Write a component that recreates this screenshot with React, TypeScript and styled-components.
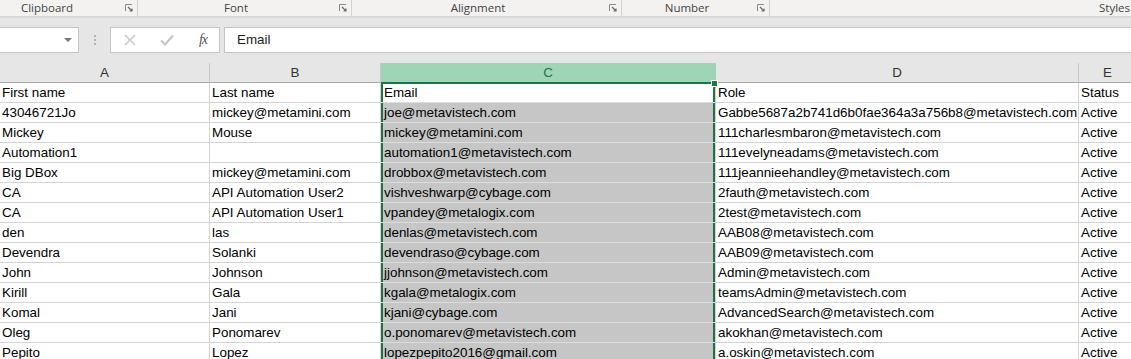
import React from 'react'
import styled, { createGlobalStyle } from 'styled-components'

//-----------------------------------------------------------------------------
// Data
//-----------------------------------------------------------------------------
const columns = ['A', 'B', 'C', 'D', 'E']
const selectedColumn = 2

const rows: string[][] = [
  ['First name', 'Last name', 'Email', 'Role', 'Status'],
  ['43046721Jo', 'mickey@metamini.com', 'joe@metavistech.com', 'Gabbe5687a2b741d6b0fae364a3a756b8@metavistech.com', 'Active'],
  ['Mickey', 'Mouse', 'mickey@metamini.com', '111charlesmbaron@metavistech.com', 'Active'],
  ['Automation1', '', 'automation1@metavistech.com', '111evelyneadams@metavistech.com', 'Active'],
  ['Big DBox', 'mickey@metamini.com', 'drobbox@metavistech.com', '111jeannieehandley@metavistech.com', 'Active'],
  ['CA', 'API Automation User2', 'vishveshwarp@cybage.com', '2fauth@metavistech.com', 'Active'],
  ['CA', 'API Automation User1', 'vpandey@metalogix.com', '2test@metavistech.com', 'Active'],
  ['den', 'las', 'denlas@metavistech.com', 'AAB08@metavistech.com', 'Active'],
  ['Devendra', 'Solanki', 'devendraso@cybage.com', 'AAB09@metavistech.com', 'Active'],
  ['John', 'Johnson', 'jjohnson@metavistech.com', 'Admin@metavistech.com', 'Active'],
  ['Kirill', 'Gala', 'kgala@metalogix.com', 'teamsAdmin@metavistech.com', 'Active'],
  ['Komal', 'Jani', 'kjani@cybage.com', 'AdvancedSearch@metavistech.com', 'Active'],
  ['Oleg', 'Ponomarev', 'o.ponomarev@metavistech.com', 'akokhan@metavistech.com', 'Active'],
  ['Pepito', 'Lopez', 'lopezpepito2016@gmail.com', 'a.oskin@metavistech.com', 'Active']
]

// the clipboard group starts left of the visible area
const groups = [
  { label: 'Clipboard', width: 164, offset: -26 },
  { label: 'Font', width: 214, offset: 0 },
  { label: 'Alignment', width: 270, offset: 0 },
  { label: 'Number', width: 148, offset: 0 }
]

//-----------------------------------------------------------------------------
// Icons
//-----------------------------------------------------------------------------
const Launcher = () => (
  <svg width="8" height="8" viewBox="0 0 8 8">
    <path d="M0.5 7V0.5H7" fill="none" stroke="#8a8a8a" strokeWidth="1" />
    <path d="M3 3L7 7M7 4.5V7H4.5" fill="none" stroke="#6a6a6a" strokeWidth="1.2" />
  </svg>
)

const CancelIcon = () => (
  <svg width="12" height="12" viewBox="0 0 12 12">
    <path d="M1 1L11 11M11 1L1 11" stroke="#c4c4c4" strokeWidth="1.4" />
  </svg>
)

const EnterIcon = () => (
  <svg width="14" height="12" viewBox="0 0 14 12">
    <path d="M1 6.5L5 10.5L13 1.5" fill="none" stroke="#c4c4c4" strokeWidth="2" />
  </svg>
)

//-----------------------------------------------------------------------------
// Component
//-----------------------------------------------------------------------------
export const App = () => {
  return (
    <Page>
      <GlobalStyle />
      <Ribbon>
        {groups.map(g => (
          <Group key={g.label} width={g.width} offset={g.offset}>
            <GroupLabel>{g.label}</GroupLabel>
            <LauncherSlot><Launcher /></LauncherSlot>
          </Group>
        ))}
        <LastGroup>
          <GroupLabel>Styles</GroupLabel>
        </LastGroup>
      </Ribbon>
      <RibbonShadow />
      <FormulaArea>
        <NameBox>
          <DropArrow />
        </NameBox>
        <Grip>
          <Dot /><Dot /><Dot />
        </Grip>
        <FxBox>
          <CancelIcon />
          <EnterIcon />
          <FxLabel>fx</FxLabel>
        </FxBox>
        <FormulaInput>Email</FormulaInput>
      </FormulaArea>
      <Sheet>
        {columns.map((c, i) => (
          <ColumnHeader key={c} selected={i === selectedColumn}>{c}</ColumnHeader>
        ))}
        {rows.map((row, r) =>
          row.map((value, c) => (
            <Cell
              key={`${r}-${c}`}
              selected={c === selectedColumn}
              active={c === selectedColumn && r === 0}>
              {value}
              {c === selectedColumn && r === 0 && <FillHandle />}
            </Cell>
          ))
        )}
      </Sheet>
    </Page>
  )
}

//-----------------------------------------------------------------------------
// Styled Components
//-----------------------------------------------------------------------------
const GlobalStyle = createGlobalStyle`
  body {
    margin: 0;
    background: #ffffff;
    font-family: "Liberation Sans", Arial, sans-serif;
  }
`

const Page = styled.div`
  width: 1131px;
  height: 359px;
  overflow: hidden;
  background: #e6e6e6;
`

const Ribbon = styled.div`
  display: flex;
  height: 16px;
  background: #f3f2f1;
`

const Group = styled.div<{ width: number; offset: number }>`
  position: relative;
  flex: none;
  width: ${p => p.width}px;
  margin-left: ${p => p.offset}px;
  display: flex;
  justify-content: center;
  align-items: center;
  padding-right: 17px;
  border-right: 1px solid #d2d2d2;
  box-sizing: border-box;
  height: 16px;
`

const LastGroup = styled.div`
  flex: 1;
  display: flex;
  justify-content: flex-end;
  align-items: center;
  padding-right: 1px;
`

const GroupLabel = styled.span`
  font-family: "Open Sans", "Noto Sans", sans-serif;
  font-size: 11.5px;
  color: #444444;
  line-height: 16px;
`

const LauncherSlot = styled.span`
  position: absolute;
  right: 4px;
  top: 4px;
  display: flex;
`

const RibbonShadow = styled.div`
  height: 3px;
  background: linear-gradient(#d4d4d4, #e6e6e6);
`

const FormulaArea = styled.div`
  display: flex;
  align-items: center;
  height: 26px;
  margin-top: 8px;
  margin-bottom: 10px;
`

const NameBox = styled.div`
  width: 79px;
  height: 26px;
  box-sizing: border-box;
  background: #ffffff;
  border: 1px solid #c6c6c6;
  border-left: none;
  display: flex;
  justify-content: flex-end;
  align-items: center;
  padding-right: 6px;
`

const DropArrow = styled.span`
  width: 0;
  height: 0;
  border-left: 4px solid transparent;
  border-right: 4px solid transparent;
  border-top: 4px solid #777777;
`

const Grip = styled.div`
  width: 31px;
  display: flex;
  flex-direction: column;
  align-items: center;
  gap: 2px;
`

const Dot = styled.span`
  width: 2px;
  height: 2px;
  background: #b4b4b4;
`

const FxBox = styled.div`
  width: 110px;
  height: 26px;
  box-sizing: border-box;
  background: #ffffff;
  border: 1px solid #c6c6c6;
  display: flex;
  align-items: center;
  justify-content: space-between;
  padding: 0 12px 0 13px;
`

const FxLabel = styled.span`
  font-family: "Liberation Serif", "Times New Roman", serif;
  font-style: italic;
  font-size: 14px;
  color: #555555;
  letter-spacing: -1px;
`

const FormulaInput = styled.div`
  flex: 1;
  height: 26px;
  margin-left: 4px;
  box-sizing: border-box;
  background: #ffffff;
  border: 1px solid #c6c6c6;
  border-right: none;
  padding-left: 12px;
  font-size: 13.4px;
  line-height: 24px;
  color: #222222;
`

const Sheet = styled.div`
  display: grid;
  grid-template-columns: 210px 171px 335px 363px 58px;
  grid-auto-rows: 20px;
  background: #ffffff;
`

const ColumnHeader = styled.div<{ selected?: boolean }>`
  background: ${p => (p.selected ? '#9fd5b7' : '#e6e6e6')};
  color: ${p => (p.selected ? '#217346' : '#333333')};
  border-right: 1px solid ${p => (p.selected ? '#9fd5b7' : '#c8c8c8')};
  border-bottom: 1px solid ${p => (p.selected ? '#217346' : '#ababab')};
  box-sizing: border-box;
  text-align: center;
  font-size: 13.4px;
  line-height: 20px;
`

const Cell = styled.div<{ selected?: boolean; active?: boolean }>`
  position: relative;
  box-sizing: border-box;
  padding-left: ${p => (p.selected ? '3px' : '2px')};
  font-size: 13.4px;
  line-height: 20px;
  color: #000000;
  white-space: nowrap;
  overflow: ${p => (p.active ? 'visible' : 'hidden')};
  z-index: ${p => (p.active ? 2 : 0)};
  background: ${p => (p.active ? '#ffffff' : p.selected ? '#c6c6c6' : '#ffffff')};
  border-right: 1px solid #d4d4d4;
  border-bottom: 1px solid ${p => (p.selected ? '#dcdcdc' : '#d4d4d4')};
  box-shadow: ${p =>
    p.active
      ? 'inset 2px 0 #217346, inset -2px 0 #217346, inset 0 1px #217346'
      : p.selected
        ? 'inset 2px 0 #217346, inset -2px 0 #217346'
        : 'none'};
`

const FillHandle = styled.span`
  position: absolute;
  top: -3px;
  right: -3px;
  width: 5px;
  height: 5px;
  background: #217346;
  border: 1px solid #ffffff;
`

export default App
